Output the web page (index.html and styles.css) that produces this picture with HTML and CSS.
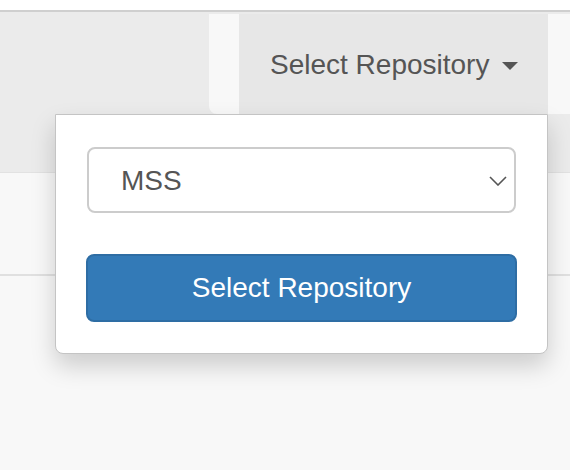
FILE: index.html
```html
<!DOCTYPE html>
<html>
<head>
<meta charset="utf-8">
<link rel="stylesheet" href="styles.css">
</head>
<body>
<div class="topstrip"></div>
<header class="header">
  <nav class="navbar">
    <div class="nav-item active">
      <span class="nav-label">Select Repository</span>
      <span class="caret"></span>
    </div>
    <div class="nav-rest"></div>
  </nav>
</header>
<main class="content">
  <div class="subbar"></div>
</main>
<div class="dropdown">
  <div class="select">
    <span>MSS</span>
    <svg class="chev" width="18" height="10" viewBox="0 0 18 10"><path d="M1 1 L9 9 L17 1" fill="none" stroke="#555" stroke-width="1.6"/></svg>
  </div>
  <button class="btn">Select Repository</button>
</div>
</body>
</html>
```
FILE: styles.css
```css
html, body {
  margin: 0;
  padding: 0;
}
body {
  width: 570px;
  height: 470px;
  overflow: hidden;
  background: #f8f8f8;
  font-family: "Liberation Sans", Arial, sans-serif;
  position: relative;
}
.topstrip {
  height: 10px;
  background: #fff;
  border-bottom: 2px solid #cfcfcf;
}
.header {
  height: 161px;
  background: #ebebeb;
  border-bottom: 1px solid #e2e2e2;
  display: flex;
  justify-content: flex-end;
  align-items: flex-start;
  padding-top: 2px;
  box-sizing: border-box;
}
.navbar {
  width: 361px;
  height: 100px;
  display: flex;
  background: #f8f8f8;
  border-bottom-left-radius: 8px;
  padding-left: 30px;
  box-sizing: border-box;
}
.nav-item {
  width: 309px;
  background: #e7e7e7;
  display: flex;
  align-items: center;
  padding-left: 31px;
  padding-top: 2px;
  box-sizing: border-box;
  font-size: 28px;
  color: #555;
}
.caret {
  width: 0;
  height: 0;
  border-left: 8px solid transparent;
  border-right: 8px solid transparent;
  border-top: 8px solid #555;
  margin-left: 13px;
  margin-top: 2px;
}
.nav-rest {
  flex: 1;
}
.content {
  height: 101px;
  background: #f8f8f8;
  border-bottom: 2px solid #e0e0e0;
}
.dropdown {
  position: absolute;
  left: 55px;
  top: 114px;
  width: 493px;
  height: 240px;
  box-sizing: border-box;
  background: #fff;
  border: 1.5px solid #c4c4c4;
  border-radius: 0 0 8px 8px;
  box-shadow: 0 12px 24px rgba(0, 0, 0, 0.175);
  padding: 32px 30px 0 30px;
  display: flex;
  flex-direction: column;
  gap: 41px;
}
.select {
  height: 66px;
  margin: 0 1px;
  border: 2px solid #cccccc;
  border-radius: 8px;
  box-sizing: border-box;
  display: flex;
  align-items: center;
  justify-content: space-between;
  padding: 2px 7px 0 32px;
  font-size: 28px;
  color: #555;
}
.chev {
  display: block;
}
.btn {
  height: 68px;
  width: 100%;
  background: #337ab7;
  border: 2px solid #2e6da4;
  border-radius: 8px;
  color: #fff;
  font-family: "Liberation Sans", Arial, sans-serif;
  font-size: 28px;
  padding: 0;
}
```
